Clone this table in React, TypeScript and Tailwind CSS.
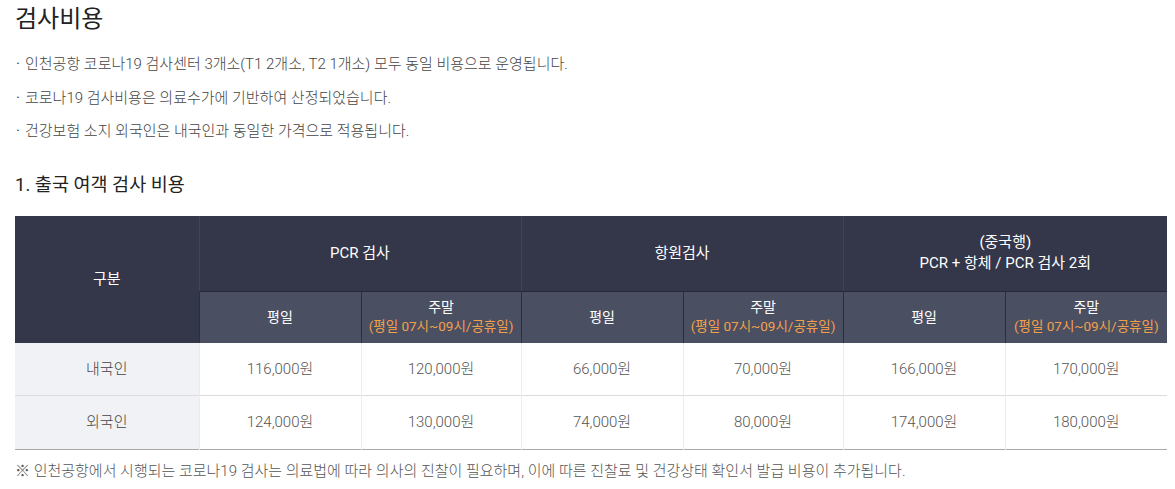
import React from "react";

const font = { fontFamily: 'Roboto, "Noto Sans CJK KR", sans-serif' };

const rows = [
  { label: "내국인", vals: ["116,000원", "120,000원", "66,000원", "70,000원", "166,000원", "170,000원"] },
  { label: "외국인", vals: ["124,000원", "130,000원", "74,000원", "80,000원", "174,000원", "180,000원"] },
];

function Sub({ weekend }: { weekend: boolean }) {
  if (!weekend) {
    return <th className="bg-[#4b4f62] border-l border-[#2c2e3d] text-white font-normal text-[14px]">평일</th>;
  }
  return (
    <th className="bg-[#4b4f62] border-l border-[#2c2e3d] text-white font-normal text-[14px] leading-[19px]">
      <div>주말</div>
      <div className="text-[#f3a04c] text-[13.5px]">(평일 07시~09시/공휴일)</div>
    </th>
  );
}

export default function App() {
  return (
    <div className="bg-white w-[1175px] h-[489px] overflow-hidden pl-[15px] text-[#333]" style={font}>
      <h1 className="text-[24px] leading-[36px] pt-[1px] text-[#222] font-normal">검사비용</h1>
      <ul className="mt-[17px] text-[15px] leading-[33.5px] text-[#444] font-light">
        <li className="flex items-baseline -mt-[6px]">
          <span className="w-[10px] pl-[1px] font-normal">·</span>
          <span>인천공항 코로나19 검사센터 3개소(T1 2개소, T2 1개소) 모두 동일 비용으로 운영됩니다.</span>
        </li>
        <li className="flex items-baseline">
          <span className="w-[10px] pl-[1px] font-normal">·</span>
          <span>코로나19 검사비용은 의료수가에 기반하여 산정되었습니다.</span>
        </li>
        <li className="flex items-baseline">
          <span className="w-[10px] pl-[1px] font-normal">·</span>
          <span>건강보험 소지 외국인은 내국인과 동일한 가격으로 적용됩니다.</span>
        </li>
      </ul>
      <h2 className="mt-[23px] text-[18.5px] leading-[26px] text-[#222] font-normal">1. 출국 여객 검사 비용</h2>
      <table className="mt-[18px] w-[1152px] table-fixed border-collapse text-center">
        <colgroup>
          <col className="w-[184px]" />
          <col className="w-[162px]" />
          <col className="w-[160px]" />
          <col className="w-[162px]" />
          <col className="w-[160px]" />
          <col className="w-[162px]" />
          <col className="w-[162px]" />
        </colgroup>
        <thead>
          <tr className="h-[76px] bg-[#343649] text-white text-[15px]">
            <th rowSpan={2} className="font-normal bg-[#343649]">구분</th>
            <th colSpan={2} className="font-normal border-l border-[#40435a] border-b border-b-[#26283a]">PCR 검사</th>
            <th colSpan={2} className="font-normal border-l border-[#40435a] border-b border-b-[#26283a]">항원검사</th>
            <th colSpan={2} className="font-normal border-l border-[#40435a] border-b border-b-[#26283a] leading-[21px]">
              <div>(중국행)</div>
              <div>PCR + 항체 / PCR 검사 2회</div>
            </th>
          </tr>
          <tr className="h-[51px]">
            <Sub weekend={false} />
            <Sub weekend={true} />
            <Sub weekend={false} />
            <Sub weekend={true} />
            <Sub weekend={false} />
            <Sub weekend={true} />
          </tr>
        </thead>
        <tbody className="text-[15px] text-[#555] font-light">
          {rows.map((r, i) => (
            <tr key={r.label} className={i === 0 ? "h-[53px] border-b border-[#dcdcdc]" : "h-[54px] border-b border-[#a9a9a9]"}>
              <td className="bg-[#f1f2f6] text-[#444]">{r.label}</td>
              {r.vals.map((v, j) => (
                <td key={j} className="border-l border-[#ececf0]">{v}</td>
              ))}
            </tr>
          ))}
        </tbody>
      </table>
      <p className="mt-[11px] text-[15px] leading-[20px] text-[#555] font-light">
        ※ 인천공항에서 시행되는 코로나19 검사는 의료법에 따라 의사의 진찰이 필요하며, 이에 따른 진찰료 및 건강상태 확인서 발급 비용이 추가됩니다.
      </p>
    </div>
  );
}
